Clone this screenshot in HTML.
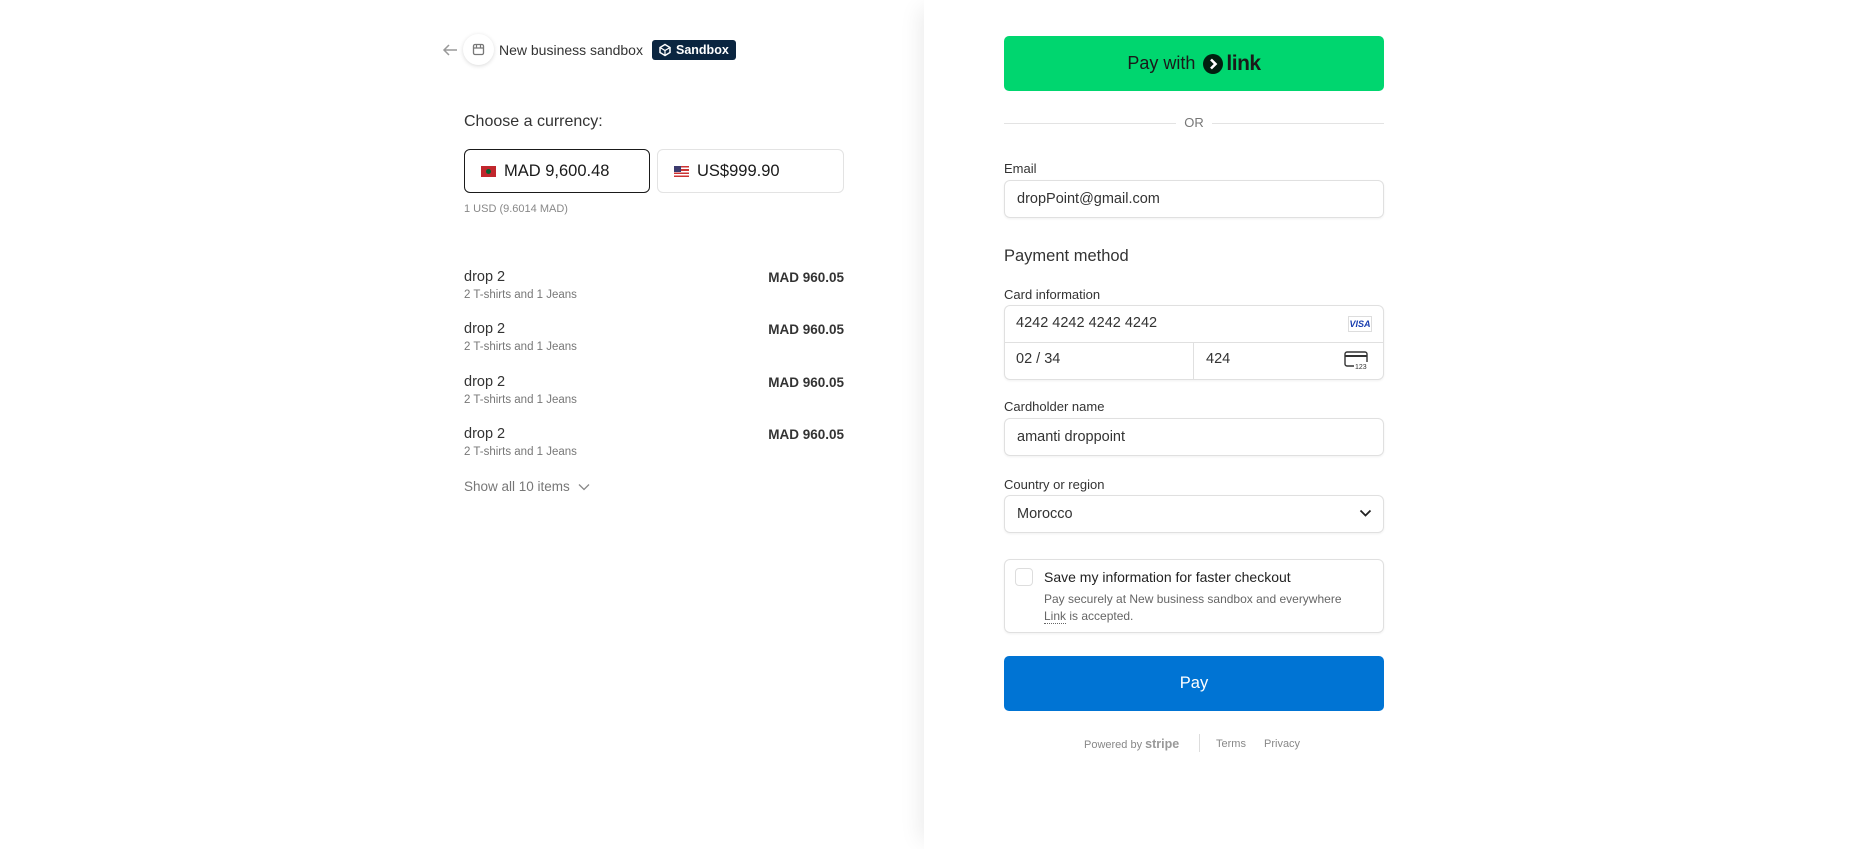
<!DOCTYPE html>
<html><head><meta charset="utf-8"><style>
*{box-sizing:border-box;margin:0;padding:0}
body{width:1850px;height:849px;background:#fff;font-family:"Liberation Sans","DejaVu Sans",sans-serif;color:#1a1a1a;position:relative;overflow:hidden}
.a{position:absolute}
.right{left:924px;top:0;width:926px;height:849px;box-shadow:-12px 0 20px -8px rgba(0,0,0,.08)}
.lbl{font-size:13px;color:#333}
.inp{border:1px solid #e0e0e0;border-radius:6px;box-shadow:0 1px 2px rgba(0,0,0,.06);font-size:14.5px;color:#333;padding-left:12px;display:flex;align-items:center}
.it{font-size:14.5px;color:#333}
.sub{font-size:11.5px;color:#777}
.pr{font-size:13.5px;font-weight:bold;color:#333;right:1006px;text-align:right}
</style></head><body>
<svg class="a" style="left:442px;top:43px" width="16" height="14" viewBox="0 0 16 14"><path d="M15 7H2M7 2L2 7l5 5" stroke="#999" stroke-width="1.5" fill="none"/></svg>
<div class="a" style="left:463px;top:34px;width:31px;height:31px;border-radius:50%;background:#fff;box-shadow:0 1px 4px rgba(0,0,0,.15)"></div>
<svg class="a" style="left:472px;top:43px" width="13" height="13" viewBox="0 0 13 13"><rect x="1.5" y="1.5" width="10" height="10" rx="1.5" stroke="#777" stroke-width="1.3" fill="none"/><path d="M1.5 5h10M4.5 1.5v3.5M8.5 1.5v3.5" stroke="#777" stroke-width="1.2"/></svg>
<div class="a" style="left:499px;top:42px;font-size:14px;color:#333">New business sandbox</div>
<div class="a" style="left:652px;top:40px;width:84px;height:20px;background:#0a2540;border-radius:3px;color:#fff;font-size:12.5px;font-weight:bold;display:flex;align-items:center;padding-left:6px"><svg width="14" height="14" viewBox="0 0 14 14" style="margin-right:4px"><path d="M7 1.5l5 3v5l-5 3-5-3v-5z" stroke="#fff" stroke-width="1.5" fill="none"/><path d="M2 4.5l5 3 5-3M7 7.5v5" stroke="#fff" stroke-width="1.2" fill="none"/></svg>Sandbox</div>
<div class="a" style="left:464px;top:113px;font-size:16px;color:#333">Choose a currency:</div>
<div class="a" style="left:464px;top:149px;width:186px;height:44px;border:1px solid #1a1a1a;border-radius:6px;display:flex;align-items:center;padding-left:16px;font-size:16.5px;color:#1a1a1a"><span style="width:15px;height:11px;background:#c1272d;margin-right:8px;position:relative;display:inline-block"><span style="position:absolute;left:5px;top:3px;width:5px;height:5px;background:#006233;border-radius:50%"></span></span>MAD 9,600.48</div>
<div class="a" style="left:657px;top:149px;width:187px;height:44px;border:1px solid #e3e3e3;border-radius:6px;display:flex;align-items:center;padding-left:16px;font-size:16.5px;color:#1a1a1a"><span style="width:15px;height:11px;margin-right:8px;display:inline-block;background:repeating-linear-gradient(#c33 0 1.6px,#fff 1.6px 3.2px);position:relative"><span style="position:absolute;left:0;top:0;width:7px;height:6px;background:#3c3b6e"></span></span>US$999.90</div>
<div class="a" style="left:464px;top:203px;font-size:11px;color:#888">1 USD (9.6014 MAD)</div>

<div class="a it" style="left:464px;top:269px">drop 2</div><div class="a sub" style="left:464px;top:289px">2 T-shirts and 1 Jeans</div><div class="a pr" style="top:270px">MAD 960.05</div>
<div class="a it" style="left:464px;top:321px">drop 2</div><div class="a sub" style="left:464px;top:341px">2 T-shirts and 1 Jeans</div><div class="a pr" style="top:322px">MAD 960.05</div>
<div class="a it" style="left:464px;top:374px">drop 2</div><div class="a sub" style="left:464px;top:394px">2 T-shirts and 1 Jeans</div><div class="a pr" style="top:375px">MAD 960.05</div>
<div class="a it" style="left:464px;top:426px">drop 2</div><div class="a sub" style="left:464px;top:446px">2 T-shirts and 1 Jeans</div><div class="a pr" style="top:427px">MAD 960.05</div>
<div class="a" style="left:464px;top:479px;font-size:13.5px;color:#777">Show all 10 items <svg width="12" height="8" viewBox="0 0 12 8" style="margin-left:4px"><path d="M1 1.5l5 5 5-5" stroke="#888" stroke-width="1.3" fill="none"/></svg></div>

<div class="a right"></div>
<div class="a" style="left:1004px;top:36px;width:380px;height:55px;background:#00d66f;border-radius:5px;display:flex;align-items:center;justify-content:center;font-size:18px;color:#1a1a1a">Pay with&nbsp;<svg width="20" height="20" viewBox="0 0 20 20" style="margin:0 3px"><circle cx="10" cy="10" r="10" fill="#011e0f"/><path d="M8 5.5l4.5 4.5L8 14.5" stroke="#fff" stroke-width="2.6" fill="none"/></svg><b style="font-size:21px;letter-spacing:-.5px">link</b></div>
<div class="a" style="left:1004px;top:123px;width:172px;height:1px;background:#e3e3e3"></div>
<div class="a" style="left:1212px;top:123px;width:172px;height:1px;background:#e3e3e3"></div>
<div class="a" style="left:1176px;top:115px;width:36px;text-align:center;font-size:13px;color:#777">OR</div>
<div class="a lbl" style="left:1004px;top:161px">Email</div>
<div class="a inp" style="left:1004px;top:180px;width:380px;height:38px">dropPoint@gmail.com</div>
<div class="a" style="left:1004px;top:247px;font-size:16.5px;color:#333">Payment method</div>
<div class="a lbl" style="left:1004px;top:287px">Card information</div>
<div class="a" style="left:1004px;top:305px;width:380px;height:75px;border:1px solid #e0e0e0;border-radius:6px;box-shadow:0 1px 2px rgba(0,0,0,.06)"></div>
<div class="a" style="left:1004px;top:342px;width:380px;height:1px;background:#e0e0e0"></div>
<div class="a" style="left:1193px;top:342px;width:1px;height:37px;background:#e0e0e0"></div>
<div class="a" style="left:1016px;top:315px;font-size:14.5px;color:#333">4242 4242 4242 4242</div>
<div class="a" style="left:1348px;top:316px;width:24px;height:16px;border:1px solid #ddd;font-size:9px;font-weight:bold;font-style:italic;color:#1a3fb0;text-align:center;line-height:14px">VISA</div>
<div class="a" style="left:1016px;top:351px;font-size:14.5px;color:#333">02 / 34</div>
<div class="a" style="left:1206px;top:351px;font-size:14.5px;color:#333">424</div>
<svg class="a" style="left:1344px;top:351px" width="26" height="19" viewBox="0 0 26 19"><rect x="1" y="1" width="22" height="14" rx="2" stroke="#333" stroke-width="1.4" fill="none"/><path d="M1 5h22" stroke="#333" stroke-width="2"/><rect x="10" y="11" width="16" height="8" fill="#fff"/><text x="11" y="18" font-size="7" font-family="Liberation Sans" fill="#333">123</text></svg>
<div class="a lbl" style="left:1004px;top:399px">Cardholder name</div>
<div class="a inp" style="left:1004px;top:418px;width:380px;height:38px">amanti droppoint</div>
<div class="a lbl" style="left:1004px;top:477px">Country or region</div>
<div class="a inp" style="left:1004px;top:495px;width:380px;height:38px">Morocco</div>
<svg class="a" style="left:1359px;top:509px" width="13" height="9" viewBox="0 0 13 9"><path d="M1.5 1.5l5 5 5-5" stroke="#222" stroke-width="1.8" fill="none"/></svg>
<div class="a" style="left:1004px;top:559px;width:380px;height:74px;border:1px solid #e0e0e0;border-radius:6px;box-shadow:0 1px 2px rgba(0,0,0,.06)"></div>
<div class="a" style="left:1015px;top:568px;width:18px;height:18px;border:1px solid #ddd;border-radius:4px"></div>
<div class="a" style="left:1044px;top:569px;font-size:14px;color:#222">Save my information for faster checkout</div>
<div class="a" style="left:1044px;top:591px;font-size:12px;color:#666;line-height:17px">Pay securely at New business sandbox and everywhere<br><span style="border-bottom:1px dotted #666">Link</span> is accepted.</div>
<div class="a" style="left:1004px;top:656px;width:380px;height:55px;background:#0074d4;border-radius:5px;color:#fff;font-size:16.5px;display:flex;align-items:center;justify-content:center">Pay</div>
<div class="a" style="left:1084px;top:737px;font-size:11px;color:#888">Powered by <b style="font-size:12.5px;color:#999">stripe</b></div>
<div class="a" style="left:1199px;top:734px;width:1px;height:18px;background:#ddd"></div>
<div class="a" style="left:1216px;top:738px;font-size:11px;color:#888">Terms</div>
<div class="a" style="left:1264px;top:738px;font-size:11px;color:#888">Privacy</div>
</body></html>
